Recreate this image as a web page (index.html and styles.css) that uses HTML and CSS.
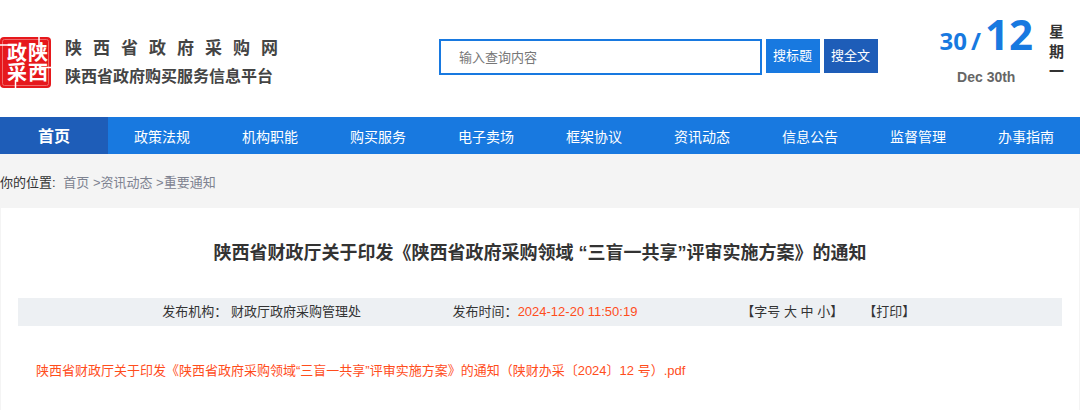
FILE: index.html
```
<!DOCTYPE html>
<html lang="zh-CN">
<head>
  <meta charset="UTF-8">
  <title>陕西省政府采购网</title>
  <meta name="viewport" content="width=device-width, initial-scale=1.0">
  <link rel="stylesheet" href="styles.css">
</head>
<body>
  <header class="header">
    <a class="logo" href="#">
      <span class="seal">
        <svg viewBox="0 0 51 51" width="51" height="51" aria-hidden="true">
          <rect width="51" height="51" rx="4" fill="#e6181c"/>
          <rect x="2.5" y="2.5" width="46" height="46" rx="2" fill="none" stroke="#f06a6c" stroke-width="1"/>
          <path d="M0 8H8M39 0V8M41 30.500H51M15.500 43V51" fill="none" stroke="#fff" stroke-width="1.500"/>
        </svg>
        <span class="seal-text">陕西政采</span>
      </span>
      <span class="site-name">
        <span class="name-main">陕 西 省 政 府 采 购 网</span>
        <span class="name-sub">陕西省政府购买服务信息平台</span>
      </span>
    </a>

    <form class="search">
      <input type="text" class="search-input" placeholder="输入查询内容" aria-label="输入查询内容">
      <button type="button" class="search-btn">搜标题</button>
      <button type="button" class="search-btn search-all">搜全文</button>
    </form>

    <div class="date">
      <div class="date-main">
        <div class="day"><span>30</span><span>/</span><span class="month">12</span></div>
        <div class="date-en">Dec 30th</div>
      </div>
      <div class="week">星期一</div>
    </div>
  </header>

  <nav class="nav">
    <a class="active" href="#">首页</a>
    <a href="#">政策法规</a>
    <a href="#">机构职能</a>
    <a href="#">购买服务</a>
    <a href="#">电子卖场</a>
    <a href="#">框架协议</a>
    <a href="#">资讯动态</a>
    <a href="#">信息公告</a>
    <a href="#">监督管理</a>
    <a href="#">办事指南</a>
  </nav>

  <div class="crumb">
    <span class="crumb-label">你的位置:</span>
    <a href="#">首页</a> &gt;<a href="#">资讯动态</a> &gt;<a href="#">重要通知</a>
  </div>

  <main class="article">
    <h1>陕西省财政厅关于印发《陕西省政府采购领域 “三盲一共享”评审实施方案》的通知</h1>
    <div class="info">
      <div>发布机构： 财政厅政府采购管理处</div>
      <div>发布时间：<span class="time">2024-12-20 11:50:19</span></div>
      <div class="tools">
        <span>【字号 <a href="#">大</a> <a href="#">中</a> <a href="#">小</a>】</span>
        <a href="#">【打印】</a>
      </div>
    </div>
    <a class="file" href="#">陕西省财政厅关于印发《陕西省政府采购领域“三盲一共享”评审实施方案》的通知（陕财办采〔2024〕12 号）.pdf</a>
  </main>
</body>
</html>
```

FILE: styles.css
```
:root {
  --blue: #1879e0;
  --dark-blue: #1e5db8;
  --red: #ff4d1c;
  --text: #333;
}

* {
  box-sizing: border-box;
}

body {
  margin: 0;
  min-height: 100vh;
  display: flex;
  flex-direction: column;
  font-family: "Liberation Sans", "Noto Sans CJK SC", sans-serif;
  font-size: 13px;
  line-height: 20px;
  color: var(--text);
  background: #f4f4f4;
}

a {
  color: inherit;
  text-decoration: none;
}

/* 顶部 */
.header {
  display: flex;
  align-items: flex-start;
  padding: 16px 15px 28px 0;
  background: #fff;
}

.logo {
  display: flex;
  align-items: flex-start;
  gap: 14px;
  margin-top: 21px;
}

/* 印章：图形和文字叠在同一格 */
.seal {
  display: grid;
  place-items: center;
}

.seal svg,
.seal-text {
  grid-area: 1 / 1;
}

.seal-text {
  height: 42px;
  writing-mode: vertical-rl;
  font-size: 20px;
  font-weight: bold;
  line-height: 21px;
  color: #fff;
}

.site-name {
  display: flex;
  flex-direction: column;
  gap: 4px;
  width: 213px;
  font-weight: bold;
  line-height: 24px;
  color: #444;
}

.name-main {
  font-size: 17px;
  text-align-last: justify;
}

.name-sub {
  font-size: 16px;
}

.search {
  display: flex;
  flex: 1;
  gap: 4px;
  margin: 23px 62px 0 161px;
}

.search-input {
  flex: 1;
  min-width: 0;
  height: 36px;
  padding: 0 18px;
  border: 2px solid var(--blue);
  font: inherit;
}

.search-input::placeholder {
  color: #777;
}

.search-btn {
  width: 54px;
  height: 34px;
  padding: 0;
  border: 0;
  font: inherit;
  color: #fff;
  background: var(--blue);
}

.search-all {
  background: var(--dark-blue);
}

.date {
  display: flex;
  gap: 16px;
}

.day {
  display: flex;
  align-items: baseline;
  gap: 4px;
  font-family: "Noto Sans", sans-serif;
  font-size: 24px;
  font-weight: bold;
  line-height: 36px;
  color: var(--blue);
}

.month {
  font-size: 42px;
}

.date-en {
  margin-top: 8px;
  font-size: 14px;
  font-weight: bold;
  text-align: center;
  color: #666;
}

.week {
  width: 16px;
  margin-top: 6px;
  font-size: 15px;
  font-weight: bold;
}

/* 导航 */
.nav {
  display: grid;
  grid-template-columns: repeat(10, 1fr);
  font-size: 14px;
  line-height: 34px;
  text-align: center;
  color: #fff;
  background: var(--blue);
}

.nav a {
  padding-top: 3px;
}

.nav .active {
  font-size: 16px;
  font-weight: bold;
  background: var(--dark-blue);
}

.crumb {
  padding: 19px 0 15px;
  color: #7d8290;
}

.crumb-label {
  margin-right: 4px;
  color: var(--text);
}

/* 正文 */
.article {
  flex: 1;
  margin: 0 1px;
  padding: 30px 17px;
  background: #fff;
}

.article h1 {
  margin: 0 0 30px;
  font-size: 18px;
  line-height: 30px;
  text-align: center;
}

.info {
  display: grid;
  grid-template-columns: repeat(3, 1fr);
  padding: 4px 92px 4px 102px;
  text-align: center;
  background: #edf0f3;
}

.time,
.file {
  color: var(--red);
}

.tools {
  display: flex;
  justify-content: center;
  gap: 20px;
}

.file {
  display: block;
  margin: 35px 18px 0;
}
```
